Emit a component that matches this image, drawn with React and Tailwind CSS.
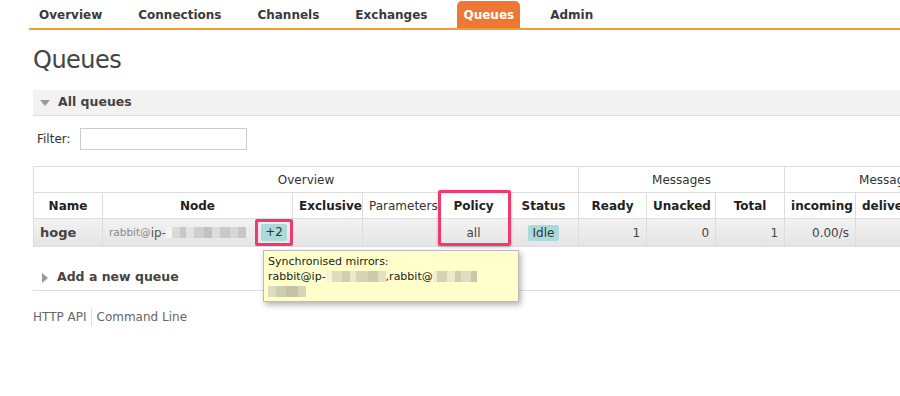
import React from 'react';

const tabs = ['Overview', 'Connections', 'Channels', 'Exchanges', 'Queues', 'Admin'];

function Blur({ blocks }) {
  return (
    <span className="inline-flex items-center align-middle">
      {blocks.map((c, i) => (
        <span key={i} className="inline-block h-[11px]" style={{ width: c[1], background: c[0] }} />
      ))}
    </span>
  );
}

const nodeBlur = [
  ['#f4f4f4', 6], ['#dadada', 8], ['#c8c8c8', 6], ['#e2e2e2', 8], ['#cfcfcf', 10], ['#c2c2c2', 8],
  ['#dcdcdc', 8], ['#c9c9c9', 10], ['#d6d6d6', 8], ['#c6c6c6', 8],
];
const tipBlur1 = [['#f5f3d8', 6], ['#dedcbe', 10], ['#d0ceb0', 8], ['#ebe9cb', 6], ['#d6d4b6', 12], ['#cccaac', 10], ['#e2e0c2', 8]];
const tipBlur2 = [['#f0eed2', 4], ['#d4d2b4', 10], ['#ebe9cb', 8], ['#cecdb0', 6], ['#dfddc0', 10], ['#c9c7aa', 6]];
const tipBlur3 = [['#dedcbe', 8], ['#cecdb0', 10], ['#c4c2a6', 12], ['#d6d4b6', 8]];

export default function App() {
  const f = { fontFamily: '"DejaVu Sans", Verdana, sans-serif' };
  const th = 'border border-[#ddd] px-[6px] font-bold text-[12px] text-[#222] h-[26px]';
  const td = 'border border-[#ddd] px-[6px] text-[12px] text-[#444] h-[27px]';
  return (
    <div className="w-[900px] h-[396px] bg-white overflow-hidden relative text-[#484848]" style={f}>
      <div className="ml-[29px] h-[30px] border-b-2 border-[#f39c34] flex items-end pl-[4px] gap-[24px]">
        {tabs.map((t) => (
          <div
            key={t}
            className={
              'px-[6px] h-[27px] flex items-center text-[12px] font-bold rounded-t-[5px] ' +
              (t === 'Queues' ? 'bg-[#ee7833] text-white' : 'text-[#3a3a3a]')
            }
          >
            {t}
          </div>
        ))}
      </div>

      <div className="pl-[33px]">
        <h1 className="text-[24px] leading-none text-[#444] mt-[18px] tracking-[-0.5px]">Queues</h1>

        <div className="mt-[18px] h-[26px] bg-[#f2f2f2] border-b border-[#ddd] flex items-center pl-[7px]">
          <span className="w-0 h-0 border-l-[5px] border-r-[5px] border-t-[6px] border-l-transparent border-r-transparent border-t-[#999]" />
          <span className="ml-[8px] text-[12.5px] font-bold text-[#444]">All queues</span>
        </div>

        <div className="mt-[12px] flex items-center pl-[4px]">
          <span className="text-[12px] text-[#333]">Filter:</span>
          <div className="ml-[9px] w-[167px] h-[22px] border border-[#ccc] bg-white" />
        </div>

        <div className="mt-[16px] relative">
          <table className="border-collapse w-[900px] table-fixed">
            <colgroup>
              <col className="w-[69px]" />
              <col className="w-[190px]" />
              <col className="w-[70px]" />
              <col className="w-[76px]" />
              <col className="w-[70px]" />
              <col className="w-[70px]" />
              <col className="w-[68px]" />
              <col className="w-[69px]" />
              <col className="w-[69px]" />
              <col className="w-[71px]" />
              <col className="w-[80px]" />
            </colgroup>
            <thead>
              <tr>
                <th colSpan={6} className={th + ' font-normal text-[#333]'}>Overview</th>
                <th colSpan={3} className={th + ' font-normal text-[#333]'}>Messages</th>
                <th colSpan={2} className={th + ' font-normal text-[#333] text-left pl-[74px] whitespace-nowrap overflow-hidden'}>Message rates</th>
              </tr>
              <tr>
                <th className={th}>Name</th>
                <th className={th}>Node</th>
                <th className={th}>Exclusive</th>
                <th className={th + ' font-normal text-[#333]'}>Parameters</th>
                <th className={th}>Policy</th>
                <th className={th}>Status</th>
                <th className={th}>Ready</th>
                <th className={th}>Unacked</th>
                <th className={th}>Total</th>
                <th className={th}>incoming</th>
                <th className={th + ' text-left whitespace-nowrap overflow-hidden'}>deliver / get</th>
              </tr>
            </thead>
            <tbody>
              <tr className="bg-gradient-to-b from-[#f2f2f2] to-[#e4e4e4]">
                <td className={td + ' font-bold text-[13px] text-[#222] text-left'}>hoge</td>
                <td className={td + ' pr-0 whitespace-nowrap'}>
                  <div className="flex items-center">
                    <span className="text-[10.5px] text-[#888]">rabbit@</span>
                    <span className="text-[12px] text-[#555]">ip-</span>
                    <Blur blocks={nodeBlur} />
                    <span className="ml-auto border-[3px] border-[#f2386f] rounded-[2px] px-[3px] py-[2px] mr-[-1px]">
                      <span className="block bg-[#aadada] text-[#333] text-[12px] px-[4px] leading-[17px] rounded-[2px]">+2</span>
                    </span>
                  </div>
                </td>
                <td className={td} />
                <td className={td} />
                <td className={td + ' text-center'}>all</td>
                <td className={td + ' text-center'}>
                  <span className="bg-[#aadada] text-[#333] px-[5px] py-[1px] rounded-[2px]">Idle</span>
                </td>
                <td className={td + ' text-right'}>1</td>
                <td className={td + ' text-right'}>0</td>
                <td className={td + ' text-right'}>1</td>
                <td className={td + ' text-right'}>0.00/s</td>
                <td className={td} />
              </tr>
            </tbody>
          </table>

          <div className="absolute left-[405px] top-[24px] w-[73px] h-[56px] border-[3px] border-[#f2386f] rounded-[2px] shadow-[0_1px_3px_rgba(0,0,0,0.25)]" />

          <div className="absolute left-[230px] top-[84px] w-[256px] bg-[#ffffcc] border border-[#bbb] shadow-[2px_3px_6px_rgba(0,0,0,0.3)] px-[4px] pt-[3px] pb-[2px] text-[11px] leading-[15px] text-[#222] z-10">
            <div>Synchronised mirrors:</div>
            <div className="flex items-center whitespace-nowrap">
              <span>rabbit@ip-</span>
              <Blur blocks={tipBlur1} />
              <span>,rabbit@</span>
              <Blur blocks={tipBlur2} />
            </div>
            <div className="flex items-center h-[15px]">
              <Blur blocks={tipBlur3} />
            </div>
          </div>
        </div>

        <div className="mt-[18px] h-[26px] border-b border-[#ddd] flex items-center pl-[9px]">
          <span className="w-0 h-0 border-t-[5px] border-b-[5px] border-l-[6px] border-t-transparent border-b-transparent border-l-[#999]" />
          <span className="ml-[9px] text-[12.5px] font-bold text-[#444]">Add a new queue</span>
        </div>

        <div className="mt-[17px] flex items-center text-[12px] text-[#666]">
          <span className="pr-[4px]">HTTP API</span>
          <span className="border-l border-[#ddd] h-[18px]" />
          <span className="pl-[5px]">Command Line</span>
        </div>
      </div>
    </div>
  );
}
